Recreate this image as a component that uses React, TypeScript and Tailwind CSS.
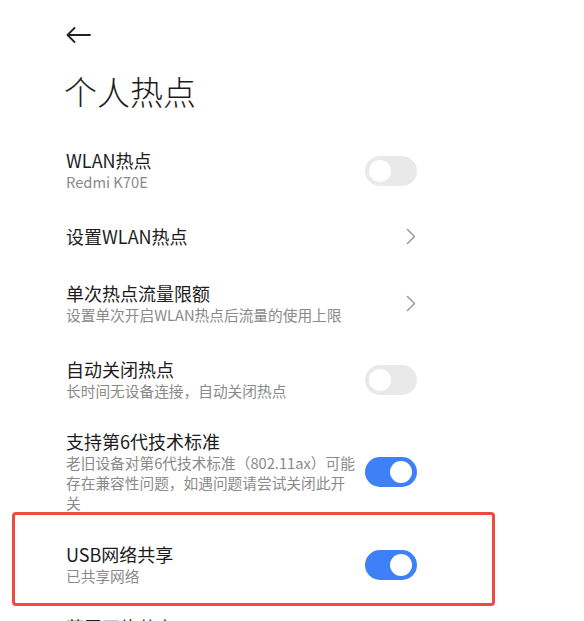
import React from "react";

type Right = "on" | "off" | "chevron";

function Toggle({ on }: { on: boolean }) {
  return (
    <div
      className={
        on
          ? "relative h-[30px] w-[52px] shrink-0 rounded-full bg-[#3e80f6]"
          : "relative h-[30px] w-[52px] shrink-0 rounded-full bg-[#e9e9e9]"
      }
    >
      <div
        className={
          on
            ? "absolute right-[5px] top-[4px] h-[22px] w-[22px] rounded-full bg-white"
            : "absolute left-[4px] top-[4px] h-[22px] w-[22px] rounded-full bg-white"
        }
      />
    </div>
  );
}

function Chevron() {
  return (
    <svg width="10" height="17" viewBox="0 0 10 17" className="mr-[1px] shrink-0">
      <polyline
        points="1.5,1.5 8.5,8.5 1.5,15.5"
        fill="none"
        stroke="#9a9a9a"
        strokeWidth="1.5"
        strokeLinecap="round"
        strokeLinejoin="round"
      />
    </svg>
  );
}

function Row({
  title,
  sub,
  right,
  className,
}: {
  title: string;
  sub?: string;
  right: Right;
  className: string;
}) {
  return (
    <div className={"flex items-center justify-between " + className}>
      <div className="flex w-[291px] flex-col">
        <div className="text-[18px] leading-[22px] text-[#1c1c1c]">{title}</div>
        {sub && (
          <div className="mt-[1px] text-[14.7px] leading-[20px] text-[#8a8a8a]">{sub}</div>
        )}
      </div>
      {right === "chevron" ? <Chevron /> : <Toggle on={right === "on"} />}
    </div>
  );
}

export default function App() {
  return (
    <div className="relative h-[621px] w-full overflow-hidden bg-white font-['Noto_Sans_CJK_SC','Noto_Sans',sans-serif]">
      <div className="flex flex-col">
        <div className="ml-[66px] mt-[27px] h-[16px]">
          <svg width="25" height="16" viewBox="0 0 25 16">
            <path
              d="M24 8H1.5M8.5 1L1.5 8l7 7"
              fill="none"
              stroke="#222"
              strokeWidth="1.8"
              strokeLinecap="round"
              strokeLinejoin="round"
            />
          </svg>
        </div>
        <h1 className="ml-[64px] mt-[26px] text-[33px] font-light leading-[44px] text-[#1c1c1c]">
          个人热点
        </h1>
        <div className="ml-[66px] flex w-[351px] flex-col">
          <Row className="mt-[36px]" title="WLAN热点" sub="Redmi K70E" right="off" />
          <Row className="mt-[33px]" title="设置WLAN热点" right="chevron" />
          <Row
            className="mt-[35px]"
            title="单次热点流量限额"
            sub="设置单次开启WLAN热点后流量的使用上限"
            right="chevron"
          />
          <Row
            className="mt-[33px]"
            title="自动关闭热点"
            sub="长时间无设备连接，自动关闭热点"
            right="off"
          />
          <Row
            className="mt-[29px]"
            title="支持第6代技术标准"
            sub="老旧设备对第6代技术标准（802.11ax）可能存在兼容性问题，如遇问题请尝试关闭此开关"
            right="on"
          />
          <Row className="mt-[30px]" title="USB网络共享" sub="已共享网络" right="on" />
          <Row className="mt-[30px]" title="蓝牙网络共享" sub="未共享网络" right="off" />
        </div>
      </div>
      <div className="pointer-events-none absolute left-[12px] top-[512px] h-[94px] w-[483px] rounded-[4px] border-[3px] border-[#f0493f]" />
    </div>
  );
}
